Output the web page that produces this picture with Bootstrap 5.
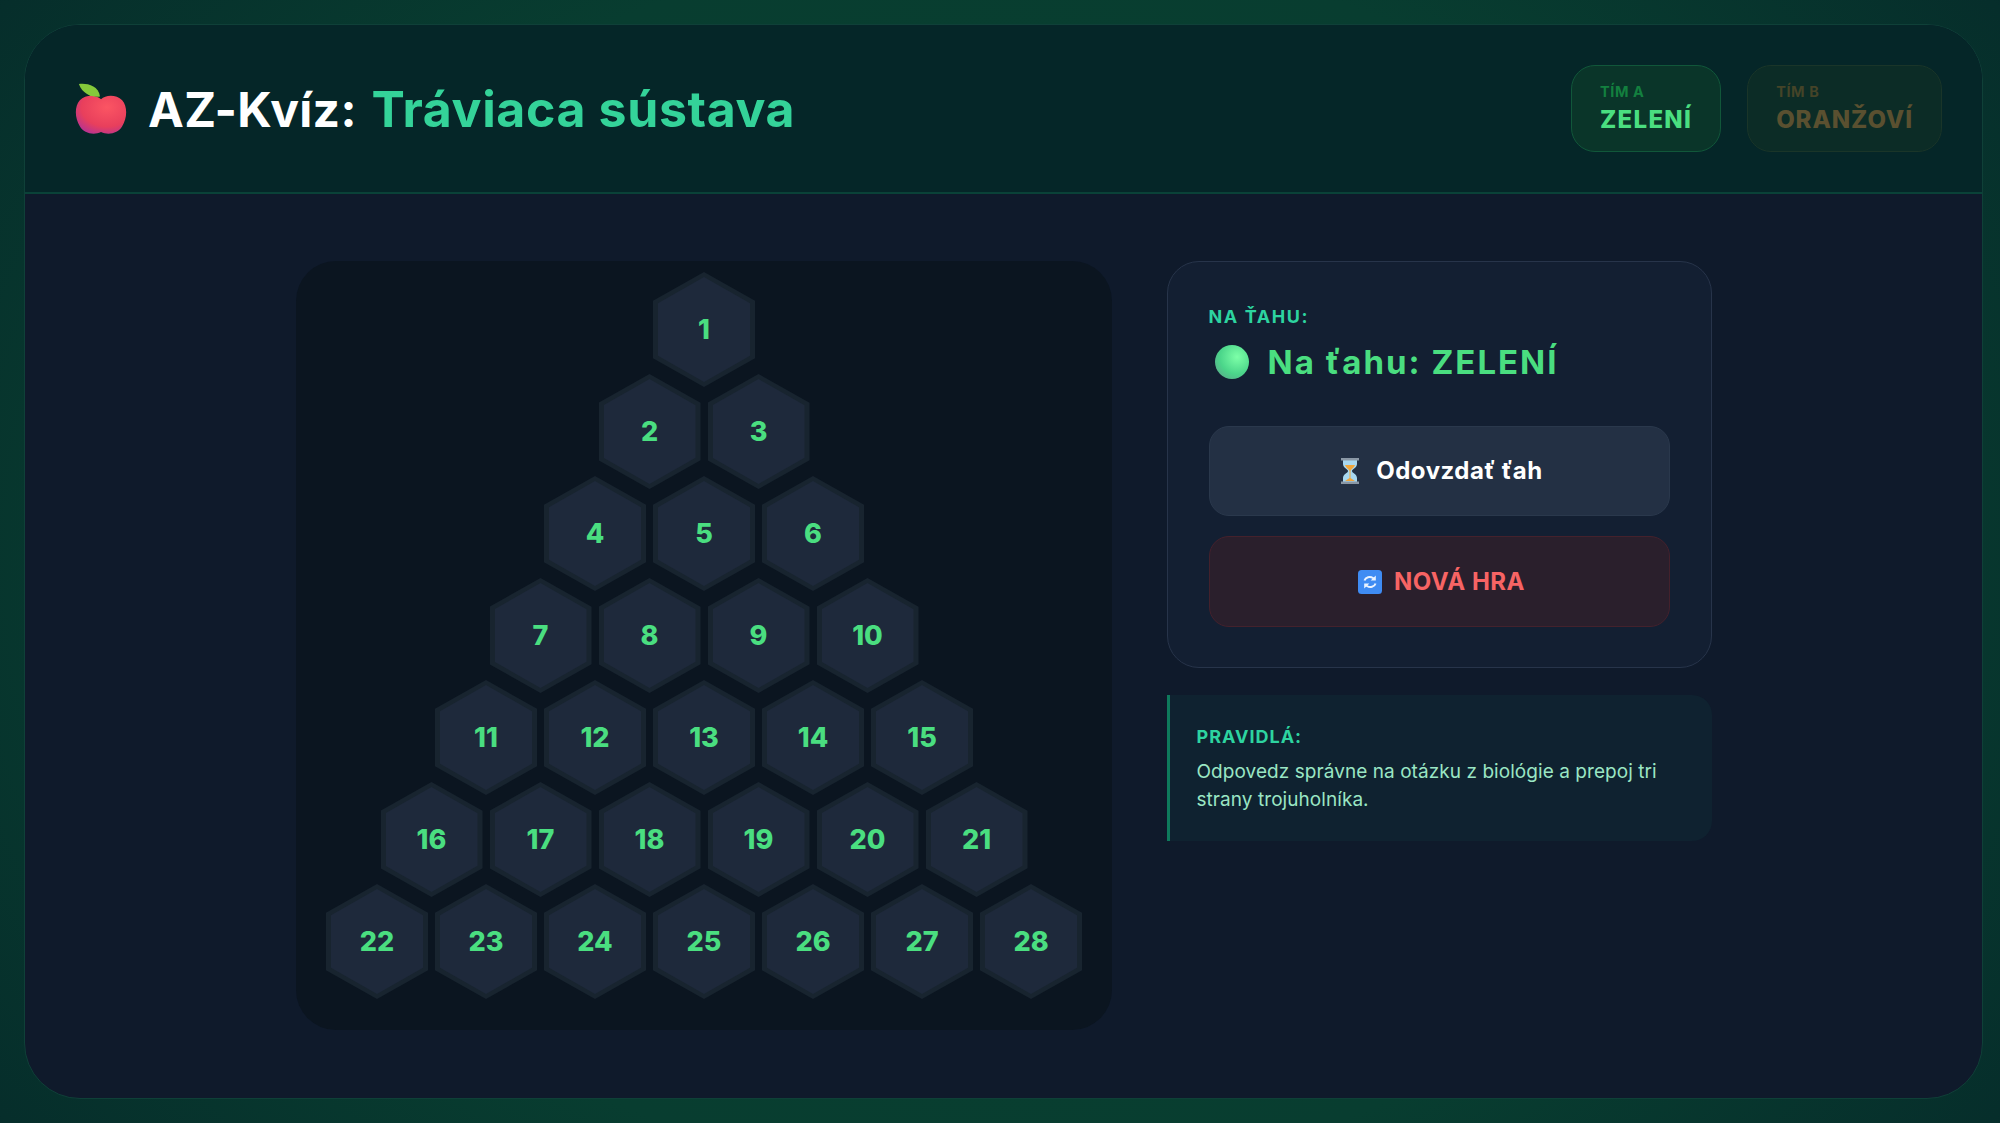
<!DOCTYPE html>
<html lang="sk">
<head>
    <meta charset="UTF-8">
    <meta name="viewport" content="width=device-width, initial-scale=1.0">
    <title>AZ-Kvíz: Tráviaca sústava</title>
    <link href="https://cdn.jsdelivr.net/npm/bootstrap@5.3.0/dist/css/bootstrap.min.css" rel="stylesheet">
    <style>
        body {
            height: 1123px;
            overflow: hidden;
            padding: 24px 17px 24px 24px;
            font-family: Inter, "Noto Sans", sans-serif;
            background: radial-gradient(ellipse 72% 100% at 50% 50%, #08442f 0%, #083d30 55%, #062e2b 85%, #032024 100%);
        }
        .quiz-shell {
            height: 1075px;
            border: 1px solid #0f4038;
            border-radius: 56px;
            overflow: hidden;
            background: #0f1a2b;
        }
        .quiz-head {
            height: 169px;
            padding: 0 40px 0 50px;
            background: #052628;
            border-bottom: 2px solid #0a4238;
        }
        .quiz-title {
            font-size: 48px;
            font-weight: 700;
            letter-spacing: .3px;
            color: #fff;
        }
        .quiz-title em { font-style: normal; font-size: 50px; letter-spacing: .6px; color: #34d399; margin-left: 3px; }
        .apple-ico { width: 52px; height: 52px; margin-right: 21px; flex: none; }
        .team-pill {
            height: 87px;
            padding: 0 28px;
            border-radius: 24px;
            border: 1px solid #11573a;
            background: #0a3529;
            color: #4ade80;
        }
        .team-pill.off { border-color: #1a3529; background: #0c2c26; color: #5a5030; }
        .team-tag { font-size: 14.5px; font-weight: 700; line-height: 18px; letter-spacing: .6px; color: #13803f; margin-bottom: 4px; }
        .team-pill.off .team-tag { color: #454428; }
        .team-name { font-size: 24px; font-weight: 800; line-height: 30px; letter-spacing: 1.3px; }
        .team-pill.off .team-name { letter-spacing: .9px; }
        .team-gap { gap: 26px; }
        .quiz-main { padding-top: 67px; gap: 55px; }
        .hex-board {
            width: 816px;
            height: 769px;
            padding: 11px 0 0 1px;
            border-radius: 40px;
            background: #0b1520;
        }
        .hex-row { gap: 7px; margin-top: -13px; }
        .hex-row:first-child { margin-top: 0; }
        .hex-cell {
            width: 102px;
            height: 115px;
            padding: 5px;
            clip-path: polygon(50% 0, 100% 25%, 100% 75%, 50% 100%, 0 75%, 0 25%);
            background: #18242f;
        }
        .hex-cell span {
            width: 100%;
            height: 100%;
            padding-top: 2px;
            clip-path: polygon(50% 0, 100% 25%, 100% 75%, 50% 100%, 0 75%, 0 25%);
            background: #1e293b;
            font-size: 27px;
            font-weight: 800;
            color: #4ade80;
        }
        .side-col { width: 545px; }
        .turn-box {
            height: 407px;
            padding: 43px 41px;
            border: 1px solid #27344a;
            border-radius: 32px;
            background: #131f32;
        }
        .turn-label { font-size: 18px; font-weight: 700; line-height: 24px; letter-spacing: 1.6px; color: #2dd4a0; }
        .turn-now { font-size: 33px; font-weight: 700; line-height: 40px; letter-spacing: 2px; color: #4ade80; margin: 13px 0 44px 6px; }
        .turn-dot {
            width: 34px;
            height: 34px;
            margin-right: 19px;
            border-radius: 50%;
            background: radial-gradient(circle at 65% 35%, #7dffa8 0%, #4bd58a 55%, #5f9a8c 100%);
        }
        .act-btn {
            height: 90px;
            padding-left: 17px;
            border-radius: 20px;
            font-size: 24px;
            font-weight: 700;
            letter-spacing: .5px;
        }
        .act-btn svg { flex: none; }
        .act-pass, .act-pass:hover { background: #233044; border: 1px solid #2a384c; color: #fff; margin-bottom: 20px; }
        .act-new, .act-new:hover { background: #2a1f2c; border: 1px solid #44212c; color: #f76464; height: 91px; letter-spacing: .5px; }
        .rules-box {
            height: 146px;
            margin-top: 27px;
            padding: 30px 27px 0 27px;
            border-left: 3px solid #0e7a5c;
            border-radius: 0 20px 20px 0;
            background: #0f2230;
        }
        .rules-title { font-size: 18px; font-weight: 700; line-height: 24px; letter-spacing: 1px; color: #2dd4a0; margin-bottom: 9px; }
        .rules-text { font-size: 19px; line-height: 28px; letter-spacing: .06px; color: #9ae6c4; margin: 0; }
    </style>
</head>
<body>

<div class="quiz-shell d-flex flex-column">
    <header class="quiz-head d-flex align-items-center justify-content-between">
        <div class="d-flex align-items-center">
            <svg class="apple-ico" viewBox="0 0 54 54">
                <defs>
                    <radialGradient id="appleFill" cx="0.62" cy="0.3" r="0.85">
                        <stop offset="0" stop-color="#fb5563"/>
                        <stop offset="0.6" stop-color="#e83f5c"/>
                        <stop offset="1" stop-color="#a92fa0"/>
                    </radialGradient>
                </defs>
                <path d="M27 17C22 12 11 12 5 18C-1 25 0 37 5 45C9 52 19 55 27 51C35 55 45 52 49 45C54 37 55 25 49 18C43 12 32 12 27 17Z" fill="url(#appleFill)"/>
                <path d="M4 1C12 0 24 2 26 14C18 15 8 12 4 1Z" fill="#85c93a"/>
            </svg>
            <h1 class="quiz-title m-0">AZ-Kvíz: <em>Tráviaca sústava</em></h1>
        </div>
        <div class="d-flex team-gap">
            <div class="team-pill d-flex flex-column justify-content-center">
                <div class="team-tag">TÍM A</div>
                <div class="team-name">ZELENÍ</div>
            </div>
            <div class="team-pill off d-flex flex-column justify-content-center">
                <div class="team-tag">TÍM B</div>
                <div class="team-name">ORANŽOVÍ</div>
            </div>
        </div>
    </header>

    <main class="quiz-main d-flex justify-content-center align-items-start">
        <section class="hex-board d-flex flex-column" id="board"></section>

        <aside class="side-col">
            <div class="turn-box">
                <div class="turn-label">NA ŤAHU:</div>
                <div class="turn-now d-flex align-items-center"><span class="turn-dot"></span>Na ťahu: ZELENÍ</div>
                <button type="button" class="btn act-btn act-pass w-100 d-flex align-items-center justify-content-center gap-3">
                    <svg width="20" height="26" viewBox="0 0 20 26">
                        <path d="M3 2H17V6C17 10 12 11 12 13C12 15 17 16 17 20V24H3V20C3 16 8 15 8 13C8 11 3 10 3 6Z" fill="#a8d8f0"/>
                        <path d="M5 7H15C14 10 11 11 10.5 13V20L15 23H5L9.500 20V13C9 11 6 10 5 7Z" fill="#f0a63c"/>
                        <rect x="1" width="18" height="2.500" fill="#8a97a5"/>
                        <rect x="1" y="23.500" width="18" height="2.500" fill="#8a97a5"/>
                    </svg>
                    Odovzdať ťah
                </button>
                <button type="button" class="btn act-btn act-new w-100 d-flex align-items-center justify-content-center gap-2">
                    <svg class="me-1" width="24" height="24" viewBox="0 0 24 24">
                        <rect width="24" height="24" rx="3.500" fill="#3f8cf3"/>
                        <path d="M6.500 10.500C7.500 7 12 6 15 8L16.500 9.200" fill="none" stroke="#eaf3ff" stroke-width="2"/>
                        <path d="M17.800 5.500V10.600H12.700Z" fill="#eaf3ff"/>
                        <path d="M17.500 13.500C16.500 17 12 18 9 16L7.500 14.800" fill="none" stroke="#eaf3ff" stroke-width="2"/>
                        <path d="M6.200 18.500V13.400H11.300Z" fill="#eaf3ff"/>
                    </svg>
                    NOVÁ HRA
                </button>
            </div>
            <div class="rules-box">
                <div class="rules-title">PRAVIDLÁ:</div>
                <p class="rules-text">Odpovedz správne na otázku z biológie a prepoj tri strany trojuholníka.</p>
            </div>
        </aside>
    </main>
</div>

<script src="https://cdn.jsdelivr.net/npm/bootstrap@5.3.0/dist/js/bootstrap.bundle.min.js"></script>
<script>
    // 7 rows, row n has n cells
    const board = document.getElementById('board');
    let num = 1;
    for (let r = 1; r <= 7; r++) {
        const row = document.createElement('div');
        row.className = 'hex-row d-flex justify-content-center';
        for (let c = 0; c < r; c++) {
            row.innerHTML += '<div class="hex-cell"><span class="d-flex align-items-center justify-content-center">' + num + '</span></div>';
            num++;
        }
        board.appendChild(row);
    }
</script>
</body>
</html>
